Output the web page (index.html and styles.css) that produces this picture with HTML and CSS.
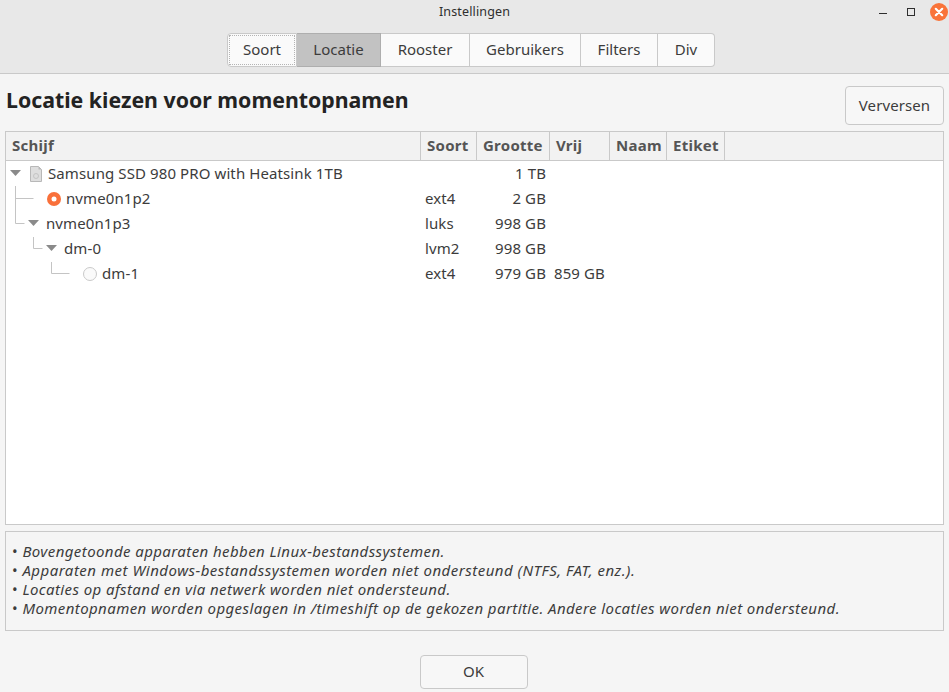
FILE: index.html
```html
<!DOCTYPE html>
<html lang="nl">
<head>
<meta charset="utf-8">
<title>Instellingen</title>
<link rel="stylesheet" href="styles.css">
</head>
<body>
<div class="window">
  <header class="chrome">
    <div class="titlebar">
      <span></span>
      <span class="title">Instellingen</span>
      <div class="controls">
        <svg class="ctl ctl-min" width="8" height="8" viewBox="0 0 8 8"><path d="M0 5.500h8" stroke="#2e2e2e" stroke-width="1"/></svg>
        <svg class="ctl ctl-max" width="8" height="8" viewBox="0 0 8 8"><rect x=".5" y=".5" width="7" height="7" fill="none" stroke="#2e2e2e"/></svg>
        <svg class="ctl ctl-close" width="18" height="18" viewBox="0 0 18 18"><circle cx="9" cy="9" r="9" fill="#f9743a"/><path d="M5.800 5.800l6.400 6.400M12.200 5.800l-6.400 6.400" stroke="#fff" stroke-width="2.200" stroke-linecap="round"/></svg>
      </div>
    </div>
    <nav class="tabs">
      <button class="tab tab-soort"><span class="focus">Soort</span></button>
      <button class="tab tab-locatie active">Locatie</button>
      <button class="tab tab-rooster">Rooster</button>
      <button class="tab tab-gebruikers">Gebruikers</button>
      <button class="tab tab-filters">Filters</button>
      <button class="tab tab-div">Div</button>
    </nav>
  </header>

  <main class="content">
    <div class="heading-row">
      <h1>Locatie kiezen voor momentopnamen</h1>
      <button class="btn refresh">Verversen</button>
    </div>

    <section class="table">
      <div class="row head">
        <div class="th">Schijf</div>
        <div class="th">Soort</div>
        <div class="th">Grootte</div>
        <div class="th">Vrij</div>
        <div class="th">Naam</div>
        <div class="th">Etiket</div>
        <div class="th last"></div>
      </div>
      <div class="body">
        <div class="row">
          <div class="td tree">
            <svg class="guide" width="24" height="25" viewBox="0 0 24 25"><path d="M4 9h11l-5.500 6z" fill="#8a8a8a"/></svg>
            <svg class="ico" width="13" height="16" viewBox="0 0 13 16"><path d="M.5.500h8l3 3v12H.5z" fill="#dedede" stroke="#b8b8b8"/><path d="M8.500.5v3h3z" fill="#b8b8b8"/><circle cx="6" cy="10" r="2.500" fill="none" stroke="#c4c4c4"/></svg>
            <span class="name name-disk">Samsung SSD 980 PRO with Heatsink 1TB</span>
          </div>
          <div class="td"></div><div class="td num">1 TB</div><div class="td"></div>
        </div>
        <div class="row">
          <div class="td tree">
            <svg class="guide" width="41" height="25" viewBox="0 0 41 25"><path d="M9.500 0v25M9.500 12.500h18" stroke="#c4c4c4" fill="none"/></svg>
            <svg class="radio" width="14" height="14" viewBox="0 0 14 14"><circle cx="7" cy="7" r="7" fill="#f9703a"/><circle cx="7" cy="7" r="2.500" fill="#fff"/></svg>
            <span class="name gap5">nvme0n1p2</span>
          </div>
          <div class="td">ext4</div><div class="td num">2 GB</div><div class="td"></div>
        </div>
        <div class="row">
          <div class="td tree">
            <svg class="guide" width="40" height="25" viewBox="0 0 40 25"><path d="M9.500 0v12.500h9" stroke="#c4c4c4" fill="none"/><path d="M22 9h11l-5.500 6z" fill="#8a8a8a"/></svg>
            <span class="name">nvme0n1p3</span>
          </div>
          <div class="td">luks</div><div class="td num">998 GB</div><div class="td"></div>
        </div>
        <div class="row">
          <div class="td tree">
            <svg class="guide" width="58" height="25" viewBox="0 0 58 25"><path d="M27.500 1v11.500h9" stroke="#c4c4c4" fill="none"/><path d="M40 9h11l-5.500 6z" fill="#8a8a8a"/></svg>
            <span class="name">dm-0</span>
          </div>
          <div class="td">lvm2</div><div class="td num">998 GB</div><div class="td"></div>
        </div>
        <div class="row">
          <div class="td tree">
            <svg class="guide" width="77" height="25" viewBox="0 0 77 25"><path d="M45.500 1v11.500h18" stroke="#c4c4c4" fill="none"/></svg>
            <svg class="radio" width="14" height="14" viewBox="0 0 14 14"><circle cx="7" cy="7" r="6.500" fill="#fafafa" stroke="#c9c9c9"/></svg>
            <span class="name gap5">dm-1</span>
          </div>
          <div class="td">ext4</div><div class="td num">979 GB</div><div class="td free">859 GB</div>
        </div>
      </div>
    </section>

    <section class="notes">
      <p>• <em>Bovengetoonde apparaten hebben Linux-bestandssystemen.</em></p>
      <p>• <em class="wide">Apparaten met Windows-bestandssystemen worden niet ondersteund (NTFS, FAT, enz.).</em></p>
      <p>• <em>Locaties op afstand en via netwerk worden niet ondersteund.</em></p>
      <p>• <em>Momentopnamen worden opgeslagen in /timeshift op de gekozen partitie. Andere locaties worden niet ondersteund.</em></p>
    </section>

    <footer class="actions">
      <button class="btn ok">OK</button>
    </footer>
  </main>
</div>
</body>
</html>
```
FILE: styles.css
```css
* { box-sizing: border-box; }
html, body { margin: 0; height: 100%; }
body {
  font-family: "Noto Sans", "Open Sans", sans-serif;
  font-size: 15px;
  color: #3c3c3c;
  background: #f5f5f5;
  overflow: hidden;
}
.window { display: flex; flex-direction: column; height: 692px; }

.chrome { height: 74px; background: #e8e8e8; border-bottom: 1px solid #c9c9c9; flex: none; }
.titlebar {
  height: 23px;
  display: grid;
  grid-template-columns: 1fr auto 1fr;
  align-items: center;
  margin-bottom: 10px;
}
.title { font-size: 12.500px; color: #2e2e2e; letter-spacing: .15px; }
.controls { display: flex; justify-content: flex-end; align-items: center; padding-right: 1px; }
.ctl-min { margin-right: 20px; }
.ctl-max { margin-right: 15px; }
.tabs { display: flex; justify-content: center; height: 34px; padding-right: 7px; }
.tab {
  font: inherit;
  color: #3c3c3c;
  background: #fafafa;
  border: 1px solid #c9c9c9;
  border-left-width: 0;
  padding: 0 0 2px;
  display: flex;
  align-items: center;
  justify-content: center;
}
.tab-soort { width: 70px; border-left-width: 1px; border-radius: 4px 0 0 4px; padding: 1px; }
.tab-locatie { width: 84px; }
.tab-rooster { width: 89px; }
.tab-gebruikers { width: 111px; }
.tab-filters { width: 77px; }
.tab-div { width: 57px; border-radius: 0 4px 4px 0; }
.tab.active { background: #c2c2c2; border-color: #aeaeae; }
.focus {
  width: 100%;
  height: 100%;
  border: 1px dotted #b4b4b4;
  padding-bottom: 2px;
  display: flex;
  align-items: center;
  justify-content: center;
}

.content { flex: 1; display: flex; flex-direction: column; padding: 0 5px; min-height: 0; }
.heading-row { display: flex; justify-content: space-between; align-items: flex-start; height: 57px; flex: none; padding-top: 12px; }
h1 { margin: 0 0 0 1px; font-size: 21.300px; line-height: 28px; font-weight: 700; color: #232323; }
.btn {
  font: inherit;
  color: #3c3c3c;
  background: #f7f7f7;
  border: 1px solid #c9c9c9;
  border-radius: 4px;
  padding: 0 0 2px;
  letter-spacing: .1px;
}
.refresh { width: 99px; height: 39px; }

.table {
  height: 394px;
  flex: none;
  background: #fff;
  border: 1px solid #c9c9c9;
  display: flex;
  flex-direction: column;
}
.row { display: grid; grid-template-columns: 415px 56px 73px 60px 57px 58px 1fr; height: 25px; align-items: center; letter-spacing: .1px; }
.row.head { height: 29px; background: #f2f2f2; border-bottom: 1px solid #c9c9c9; flex: none; align-items: stretch; letter-spacing: .25px; }
.th {
  border-right: 1px solid #c9c9c9;
  padding: 0 0 2px 6px;
  font-weight: 700;
  color: #555;
  display: flex;
  align-items: center;
}
.th.last { border-right: 0; }
.td { padding: 0 0 2px 4px; white-space: nowrap; min-width: 0; }
.td.num { text-align: right; padding: 0 4px 2px 0; }
.tree { display: flex; align-items: center; padding: 0; height: 25px; }
.name { padding-bottom: 2px; }
.guide { flex: none; display: block; }
.ico { flex: none; margin-right: 5px; }
.radio { flex: none; }
.gap5 { margin-left: 5px; }

.notes {
  height: 100px;
  flex: none;
  margin-top: 6px;
  border: 1px solid #c9c9c9;
  padding: 10px 6px;
  font-size: 15px;
  line-height: 19px;
  letter-spacing: .41px;
}
.notes p { margin: 0; }
.notes .wide { letter-spacing: .5px; }

.actions { flex: 1; display: flex; justify-content: center; align-items: flex-start; padding: 24px 2px 0 0; }
.ok { width: 108px; height: 34px; }
```
